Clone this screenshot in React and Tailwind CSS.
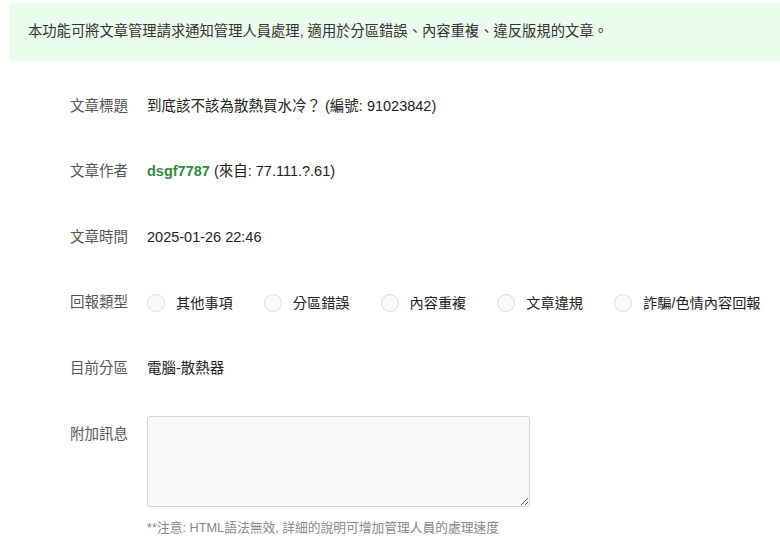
import React, { useState } from "react";

const types = ["其他事項", "分區錯誤", "內容重複", "文章違規", "詐騙/色情內容回報"];

function Row({ label, children }) {
  return (
    <div className="flex h-[65.5px] items-center">
      <div className="w-[77px] shrink-0 text-[14.5px] text-[#555]">{label}</div>
      <div className="flex items-center text-[14.5px] text-[#222]">{children}</div>
    </div>
  );
}

export default function App() {
  const [type, setType] = useState(null);

  return (
    <div
      className="h-[559px] w-[780px] overflow-hidden bg-white"
      style={{ fontFamily: '"Liberation Sans", "Noto Sans CJK TC", sans-serif' }}
    >
      {/* 說明區塊 */}
      <div className="ml-[9px] mt-[3px] flex h-[58px] w-[800px] items-center bg-[#ebfbee] pl-[19px] text-[14.3px] text-[#333]">
        本功能可將文章管理請求通知管理人員處理, 適用於分區錯誤、內容重複、違反版規的文章。
      </div>

      <div className="mt-[13px] pl-[70px]">
        <Row label="文章標題">到底該不該為散熱買水冷？ (編號: 91023842)</Row>
        <Row label="文章作者">
          <span className="font-bold text-[#2f8a3f]">dsgf7787</span>
          <span className="ml-[4px]">(來自: 77.111.?.61)</span>
        </Row>
        <Row label="文章時間">2025-01-26 22:46</Row>
        <Row label="回報類型">
          <div className="flex items-center gap-[31px]">
            {types.map((t) => (
              <label key={t} className="flex cursor-pointer items-center gap-[11px] whitespace-nowrap" onClick={() => setType(t)}>
                <span className="flex h-[18px] w-[18px] items-center justify-center rounded-full border border-[#dcdcdc] bg-[#fafafa]">
                  {type === t && <span className="h-[8px] w-[8px] rounded-full bg-[#2f8a3f]" />}
                </span>
                <span className="text-[14.2px]">{t}</span>
              </label>
            ))}
          </div>
        </Row>
        <Row label="目前分區">電腦-散熱器</Row>

        <div className="mt-[14px] flex">
          <div className="w-[77px] shrink-0 pt-[8px] text-[14.5px] text-[#555]">附加訊息</div>
          <div>
            <textarea className="block h-[91px] w-[383px] rounded-[3px] border border-[#d4d4d4] bg-[#f8f8f8] p-2 text-[14px] outline-none" />
            <div className="mt-[11px] text-[12.75px] text-[#888]">**注意: HTML語法無效, 詳細的說明可增加管理人員的處理速度</div>
          </div>
        </div>
      </div>
    </div>
  );
}
